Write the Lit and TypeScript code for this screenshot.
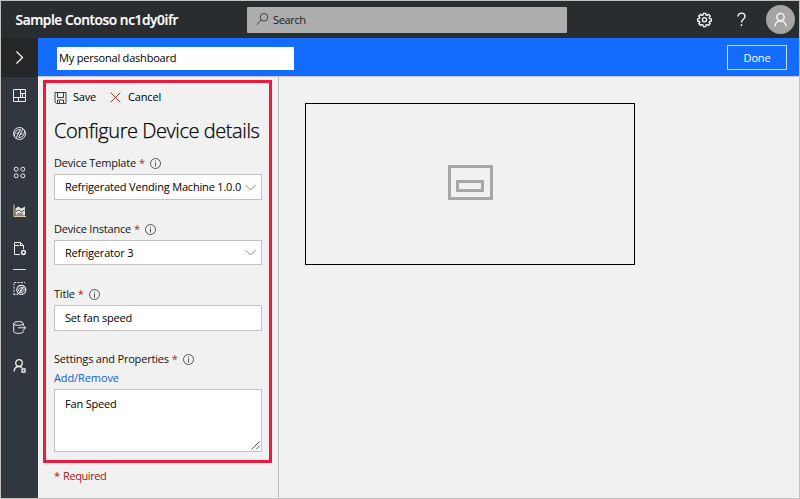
import { LitElement, html, css, svg } from "lit";
import { customElement, property } from "lit/decorators.js";

const icons: Record<string, unknown> = {
  dashboard: svg`<path d="M1.500 1.500h12v12h-12zM8.500 1.500v8M1.500 9.500h12M8.500 5.500h5M6.500 9.500v4M10.500 5.500v4"/>`,
  devices: svg`<circle cx="7.500" cy="7.500" r="6"/><path d="M2.500 10.500C2.500 5 5 3.500 8.500 3.500L4 12M12.500 4.500c0 5.500-2.500 7-6 7L11 3"/><path d="M4.500 7.500L7 6.500M8 8.500l2.500-1"/>`,
  groups: svg`<circle cx="4.200" cy="4.200" r="2"/><circle cx="10.800" cy="4.200" r="2"/><circle cx="4.200" cy="10.800" r="2"/><circle cx="10.800" cy="10.800" r="2"/>`,
  analytics: svg`<path d="M2 1.500v12h12" stroke="#e8c9a0"/><path d="M3.500 5.500l2.500-2 3.500 2 3.500-2V12.500H3.500z" fill="#e4e4e4" stroke="none"/><path d="M4 8.500l2.500-1.500 3 2L12.500 7M5 11h6" stroke="#30373f" stroke-width=".9"/>`,
  jobs: svg`<path d="M8 13.500H2.500v-12h6l3 3V8M8.500 1.500v3h3M2.500 4.500h5"/><circle cx="11.500" cy="11.500" r="1.900" stroke-width="1.500"/>`,
  templates: svg`<path d="M2 14V1.500h11" stroke-dasharray="2 1.200"/><path d="M2 13.500h4" stroke-dasharray="1.500 1"/><circle cx="9.300" cy="8.800" r="4.500" stroke-width="1.200"/><path d="M6.500 10c0-2.500 1.500-3.500 4-3.500l-3.500 5.500M12.200 7.500c0 3-1.500 4-4 3.800l3.500-5.500"/>`,
  exporting: svg`<ellipse cx="6.500" cy="3.500" rx="4.800" ry="1.900"/><path d="M1.700 3.500v8c0 2.500 9.600 2.500 9.600 0V10.500M11.300 3.500V5M6 7.800h7.500M11 5.200l2.600 2.600L11 10.400"/>`,
  admin: svg`<circle cx="7" cy="5" r="3.300" stroke-width="1.300"/><path d="M2 13.500c.3-3 2.200-5 5-5 1.500 0 2.500.5 3.200 1.300" stroke-width="1.300"/><path d="M10 11h3v3h-3z" stroke-width="1.300"/>`,
  chevronRight: svg`<path d="M4.500 1.500l6 6-6 6" stroke-width="1.300"/>`,
  chevronDown: svg`<path d="M2.500 5l5 5 5-5"/>`,
  search: svg`<circle cx="9" cy="5.300" r="3.800"/><path d="M6.300 8L1.800 12.700"/>`,
  save: svg`<path d="M2 2.500h11v11H3.500L2 12z"/><path d="M4.500 2.500v5h6v-5M4.500 13.500v-3.500h6v3.500M6.500 11v2.500"/>`,
  cancel: svg`<path d="M2.700 2.700l9.600 9.600M12.300 2.700l-9.600 9.600"/>`,
  info: svg`<circle cx="7.500" cy="7.500" r="5"/><path d="M7.500 6.500v4M7.500 4.500v1"/>`,
  gear: svg`<path d="M6.300 1.300h2.400l.3 1.700 1 .4 1.500-1 1.700 1.700-1 1.400.4 1 1.700.4v2.200l-1.700.3-.4 1 1 1.400-1.700 1.700-1.500-1-1 .4-.3 1.700H6.300L6 12.900l-1-.4-1.500 1-1.700-1.700 1-1.400-.4-1-1.700-.3V6.900l1.700-.4.4-1-1-1.400 1.700-1.700 1.500 1 1-.4z" stroke-width="1.300"/><circle cx="7.500" cy="7.700" r="2.100" stroke-width="1.300"/>`,
  help: svg`<path d="M4 4.500c0-4.500 7-4.500 7 0 0 2.700-3.500 2.800-3.500 6" stroke-width="1.300"/><path d="M7.500 12.300v1.700" stroke-width="1.500"/>`,
  person: svg`<circle cx="7.500" cy="5" r="3.700" stroke-width="1.300"/><path d="M2 14.300c0-7.400 11-7.400 11 0" stroke-width="1.300"/>`,
};

@customElement("app-icon")
class AppIcon extends LitElement {
  @property() name = "";
  static styles = css`
    :host { display: block; width: 15px; height: 15px; flex: none; }
    svg { display: block; width: 100%; height: 100%; overflow: visible; }
  `;
  render() {
    return html`<svg viewBox="0 0 15 15" fill="none" stroke="currentColor">${icons[this.name]}</svg>`;
  }
}

@customElement("field-label")
class FieldLabel extends LitElement {
  @property() text = "";
  static styles = css`
    :host { display: flex; align-items: center; height: 16px; color: #111; white-space: pre; letter-spacing: -.2px; }
    .star { color: #a4262c; margin-left: 3px; }
    app-icon { margin-left: 3px; color: #555; }
  `;
  render() {
    return html`<span>${this.text}</span><span class="star">*</span><app-icon name="info"></app-icon>`;
  }
}

@customElement("app-root")
class AppRoot extends LitElement {
  static styles = css`
    :host {
      display: flex; flex-direction: column; box-sizing: border-box;
      width: 800px; height: 499px; border: 1px solid #c0c2c2;
      background: #f1f1f1; color: #000; overflow: hidden;
      font: 11px/16px "Open Sans", "Noto Sans", sans-serif;
      letter-spacing: -.18px;
    }
    * { box-sizing: border-box; }
    .header { height: 37px; flex: none; display: flex; align-items: center; background: #292d30; color: #fff; }
    .brand { width: 246px; padding-left: 14.500px; font-size: 14px; font-weight: 600; letter-spacing: -.38px; line-height: 36px; white-space: nowrap; letter-spacing: -.4px; font-size: 13.700px; -webkit-text-stroke: .2px #fff; }
    .search { width: 320px; height: 26px; display: flex; align-items: center; background: #adadad; color: #222; border-radius: 1px; padding-left: 8px; gap: 3px; letter-spacing: -.35px; }
    .search app-icon { color: #444; }
    .tools { margin-left: auto; display: flex; align-items: center; padding-right: 4px; }
    .tools .gear { margin-top: -1px; }
    .tools .help { margin: -1px 17px 0 22px; }
    .avatar { width: 29px; height: 29px; border-radius: 50%; background: #a5a5a5; display: grid; place-items: center; }
    .main { flex: 1; display: flex; min-height: 0; }
    .nav { width: 37px; flex: none; background: #30373f; color: #eee; display: flex; flex-direction: column; align-items: center; }
    .toggle { width: 100%; height: 39px; flex: none; background: #242628; color: #fff; display: grid; place-items: center; }
    .item { width: 15px; height: 38.300px; flex: none; padding-top: 11px; }
    .rule { width: 13px; height: 1px; background: #ddd; flex: none; margin-top: 1px; }
    .content { flex: 1; display: flex; flex-direction: column; min-width: 0; }
    .bar { height: 39px; flex: none; background: #146cff; border-bottom: 1px solid #c8c8c8; display: flex; align-items: center; justify-content: space-between; padding: 0 12px 0 19px; }
    .name { width: 237px; height: 23px; background: #fff; padding: 3px 2px; margin-top: 2px; letter-spacing: -.2px; }
    .done { width: 60px; height: 25px; border: 1px solid #c5daff; color: #fff; text-align: center; line-height: 23px; margin-top: 1px; }
    .body { flex: 1; display: flex; min-height: 0; }
    .panel { width: 241px; border-right: 1px solid #bfbfbf; padding: 3px 0 0 5px; }
    .form { width: 229px; height: 383px; border: 3px solid #ed1a3b; display: flex; flex-direction: column; padding: 6px 8px 0; }
    .actions { display: flex; align-items: center; height: 16px; }
    .actions .save { color: #30404d; margin: 0 5px 0 -1px; }
    .actions .cancel { color: #8a3b2c; margin: 0 5px 0 12px; }
    .title { font-size: 20px; line-height: 28px; font-weight: 300; margin: 12px 0 10px; white-space: nowrap; letter-spacing: -.43px; -webkit-text-stroke: .25px #000; }
    .box { width: 208px; height: 26px; flex: none; border: 1px solid #c3c3c3; background: #fff; margin: 3px 0 21px; padding: 0 3px 0 10px; display: flex; align-items: center; justify-content: space-between; white-space: nowrap; }
    .box.instance { height: 25px; }
    .box.caption { margin-bottom: 20px; }
    .box app-icon { color: #888; }
    .link { color: #0b62d6; height: 16px; margin-top: 3px; letter-spacing: -.1px; }
    .area { position: relative; width: 208px; height: 63px; flex: none; border: 1px solid #c3c3c3; background: #fff; margin-top: 3px; padding: 6px 10px; }
    .grip { position: absolute; right: 1px; bottom: 1px; width: 9px; height: 9px; }
    .required { margin: 5px 0 0 11px; color: #a01820; letter-spacing: -.42px; word-spacing: 1px; }
    .canvas { flex: 1; padding: 26px; }
    .tile { width: 330px; height: 162px; border: 1px solid #000; display: grid; place-items: center; }
    .glyph { width: 45px; height: 35px; border: 3px solid #a6a6a6; display: grid; place-items: center; margin-top: -3px; }
    .glyph-in { width: 28px; height: 12px; border: 3px solid #a6a6a6; margin-top: 6px; }
  `;
  render() {
    const nav = (n: string) => html`<div class="item"><app-icon name=${n}></app-icon></div>`;
    return html`
      <div class="header">
        <div class="brand">Sample Contoso nc1dy0ifr</div>
        <div class="search"><app-icon name="search"></app-icon><span>Search</span></div>
        <div class="tools">
          <app-icon class="gear" name="gear"></app-icon>
          <app-icon class="help" name="help"></app-icon>
          <div class="avatar"><app-icon name="person"></app-icon></div>
        </div>
      </div>
      <div class="main">
        <div class="nav">
          <div class="toggle"><app-icon name="chevronRight"></app-icon></div>
          ${["dashboard", "devices", "groups", "analytics", "jobs"].map(nav)}
          <div class="rule"></div>
          ${["templates", "exporting", "admin"].map(nav)}
        </div>
        <div class="content">
          <div class="bar"><div class="name">My personal dashboard</div><div class="done">Done</div></div>
          <div class="body">
            <div class="panel">
              <div class="form">
                <div class="actions">
                  <app-icon class="save" name="save"></app-icon><span>Save</span>
                  <app-icon class="cancel" name="cancel"></app-icon><span>Cancel</span>
                </div>
                <div class="title">Configure Device details</div>
                <field-label text="Device Template"></field-label>
                <div class="box"><span>Refrigerated Vending Machine 1.0.0</span><app-icon name="chevronDown"></app-icon></div>
                <field-label text="Device Instance"></field-label>
                <div class="box instance"><span>Refrigerator 3</span><app-icon name="chevronDown"></app-icon></div>
                <field-label text="Title"></field-label>
                <div class="box caption"><span>Set fan speed</span></div>
                <field-label text="Settings and Properties"></field-label>
                <div class="link">Add/Remove</div>
                <div class="area">Fan Speed
                  <svg class="grip" viewBox="0 0 9 9" stroke="#555" fill="none"><path d="M.5 8.500l8-8M5 8.500L8.500 5"/></svg>
                </div>
              </div>
              <div class="required">* Required</div>
            </div>
            <div class="canvas"><div class="tile"><div class="glyph"><div class="glyph-in"></div></div></div></div>
          </div>
        </div>
      </div>
    `;
  }
}
